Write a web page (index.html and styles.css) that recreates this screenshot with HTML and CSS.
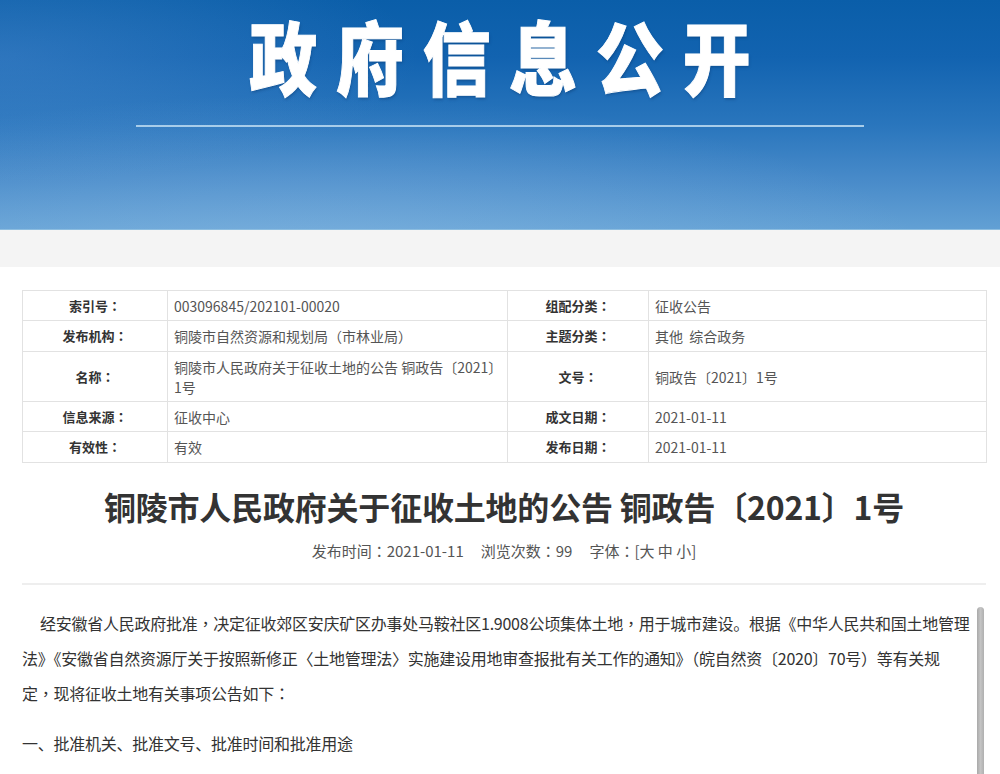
FILE: index.html
```html
<!DOCTYPE html>
<html lang="zh-CN">
<head>
<meta charset="utf-8">
<title>政府信息公开</title>
<link rel="stylesheet" href="styles.css">
</head>
<body>
<header class="banner">
  <h1 class="banner-title"><span class="banner-text">政府信息公开</span></h1>
  <div class="banner-rule"></div>
</header>
<div class="band"></div>
<main class="wrap">
  <table class="info">
    <colgroup>
      <col class="c1"><col class="c2"><col class="c3"><col class="c4">
    </colgroup>
    <tr class="r1">
      <th>索引号<span class="tc" lang="zh-Hant">：</span></th><td>003096845/202101-00020</td>
      <th>组配分类<span class="tc" lang="zh-Hant">：</span></th><td>征收公告</td>
    </tr>
    <tr class="r2">
      <th>发布机构<span class="tc" lang="zh-Hant">：</span></th><td>铜陵市自然资源和规划局<span class="tc" lang="zh-Hant">（</span>市林业局<span class="tc" lang="zh-Hant">）</span></td>
      <th>主题分类<span class="tc" lang="zh-Hant">：</span></th><td>其他&nbsp;&nbsp;综合政务</td>
    </tr>
    <tr class="r3">
      <th>名称<span class="tc" lang="zh-Hant">：</span></th><td>铜陵市人民政府关于征收土地的公告 铜政告〔2021〕<span class="nowrap">1号</span></td>
      <th>文号<span class="tc" lang="zh-Hant">：</span></th><td>铜政告〔2021〕1号</td>
    </tr>
    <tr class="r4">
      <th>信息来源<span class="tc" lang="zh-Hant">：</span></th><td>征收中心</td>
      <th>成文日期<span class="tc" lang="zh-Hant">：</span></th><td>2021-01-11</td>
    </tr>
    <tr class="r5">
      <th>有效性<span class="tc" lang="zh-Hant">：</span></th><td>有效</td>
      <th>发布日期<span class="tc" lang="zh-Hant">：</span></th><td>2021-01-11</td>
    </tr>
  </table>

  <h2 class="doc-title">铜陵市人民政府关于征收土地的公告 铜政告〔2021〕1号</h2>
  <div class="meta">发布时间<span class="tc" lang="zh-Hant">：</span>2021-01-11<span class="gap"></span>浏览次数<span class="tc" lang="zh-Hant">：</span>99<span class="gap"></span>字体<span class="tc" lang="zh-Hant">：</span>[大 中 小]</div>
  <div class="divider"></div>

  <div class="content-row">
    <div class="content">
      <p class="lead">经安徽省人民政府批准<span class="tc" lang="zh-Hant">，</span>决定征收郊区安庆矿区办事处马鞍社区1.9008公顷集体土地<span class="tc" lang="zh-Hant">，</span>用于城市建设。根据《中华人民共和国土地管理<br>法》《安徽省自然资源厅关于按照新修正〈土地管理法〉实施建设用地审查报批有关工作的通知》<span class="tc" lang="zh-Hant">（</span>皖自然资〔2020〕70号<span class="tc" lang="zh-Hant">）</span>等有关规<br>定<span class="tc" lang="zh-Hant">，</span>现将征收土地有关事项公告如下<span class="tc" lang="zh-Hant">：</span></p>
      <p>一、批准机关、批准文号、批准时间和批准用途</p>
    </div>
    <div class="scroll-track"><div class="scroll-thumb"></div></div>
  </div>
</main>
</body>
</html>
```
FILE: styles.css
```css
html, body {
  margin: 0;
  padding: 0;
  background: #fff;
}
body {
  font-family: "Noto Sans CJK SC", "Noto Sans", sans-serif;
  color: #333;
  overflow: hidden;
}
.tc {
  font-family: "Noto Sans CJK TC", "Noto Sans CJK SC", sans-serif;
}
.nowrap {
  white-space: nowrap;
}

.banner {
  height: 230px;
  box-sizing: border-box;
  padding-top: 9px;
  display: flex;
  flex-direction: column;
  align-items: center;
  background:
    radial-gradient(ellipse 900px 240px at 30% 115%, rgba(160, 200, 235, 0.35), rgba(160, 200, 235, 0) 70%),
    radial-gradient(ellipse 600px 180px at 0% 25%, rgba(110, 160, 220, 0.30), rgba(110, 160, 220, 0) 70%),
    linear-gradient(to bottom, #0a5ea9 0%, #1263b0 25%, #2a76bd 55%, #4a8cca 80%, #62a0d4 100%);
  border-bottom: 1px solid #8cbde0;
}
.banner-title {
  margin: 0;
  font-size: 80px;
  line-height: 90px;
  font-weight: 900;
  color: #fff;
  white-space: nowrap;
}
.banner-text {
  display: inline-block;
  letter-spacing: 22px;
  padding-left: 22px;
  transform: scaleX(0.85);
  -webkit-text-stroke: 1px #fff;
  text-shadow: 1px 2px 3px rgba(0, 40, 90, 0.35);
}
.banner-rule {
  margin-top: 26px;
  width: 728px;
  height: 2px;
  background: #a8cdea;
}

.band {
  height: 37px;
  background: #f4f4f4;
}

.wrap {
  margin-left: 22px;
  width: 964px;
  padding-top: 23px;
}

.info {
  width: 964px;
  border-collapse: collapse;
  table-layout: fixed;
}
.info .c1 { width: 145px; }
.info .c2 { width: 340px; }
.info .c3 { width: 141px; }
.info .c4 { width: 338px; }
.info th, .info td {
  border: 1px solid #e2e2e2;
  line-height: 20px;
  padding: 0;
}
.info th {
  font-size: 13px;
  font-weight: 700;
  color: #333;
  text-align: center;
}
.info td {
  font-size: 14px;
  color: #555;
  text-align: left;
  padding: 0 2px 0 6px;
}
.info .r1 { height: 30px; }
.info .r2 { height: 31px; }
.info .r3 { height: 50px; }
.info .r4 { height: 30px; }
.info .r5 { height: 31px; }

.doc-title {
  margin: 23px 0 0;
  font-size: 32px;
  line-height: 40px;
  font-weight: 700;
  color: #333;
  letter-spacing: -0.2px;
  text-align: center;
}
.meta {
  margin-top: 15px;
  font-size: 15px;
  line-height: 20px;
  color: #555;
  text-align: center;
}
.meta .gap {
  display: inline-block;
  width: 17px;
}
.divider {
  margin-top: 22px;
  height: 2px;
  background: #eeeeee;
}

.content-row {
  display: flex;
  align-items: flex-start;
  margin-top: 21px;
}
.content {
  width: 950px;
  font-size: 16px;
  line-height: 35px;
  letter-spacing: -0.25px;
  color: #333;
}
.content p {
  margin: 0 0 15px;
}
.content .lead {
  text-indent: 18px;
}
.scroll-track {
  margin-left: 5px;
  padding-top: 1px;
}
.scroll-thumb {
  width: 7px;
  height: 300px;
  border-radius: 4px;
  background: linear-gradient(to right, #a9a9a9, #c4c4c4 50%, #b0b0b0);
}
```
